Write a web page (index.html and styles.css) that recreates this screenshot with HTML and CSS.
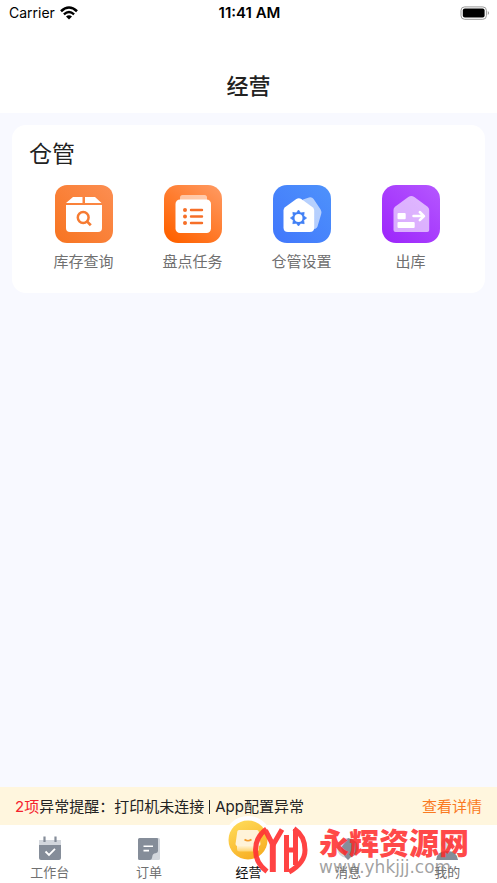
FILE: index.html
```html
<!DOCTYPE html>
<html lang="zh-CN">
<head>
  <meta charset="UTF-8" />
  <meta name="viewport" content="width=device-width, initial-scale=1.0" />
  <title>经营</title>
  <link rel="stylesheet" href="styles.css">
</head>
<body>
  <div class="statusbar">
    <div class="carrier">
      <span>Carrier</span>
      <svg width="18" height="14" viewBox="0 0 18 14">
        <path d="M1 5.2 Q9 -2.2 17 5.2" fill="none" stroke="#000" stroke-width="2.6"/>
        <path d="M3.9 8.3 Q9 3.6 14.1 8.3" fill="none" stroke="#000" stroke-width="2.3"/>
        <path d="M6 10.6 Q9 8 12 10.6 L9 13.6 Z"/>
      </svg>
    </div>
    <div class="time">11:41 AM</div>
    <div class="battery">
      <svg width="30" height="14" viewBox="0 0 30 14">
        <rect x="1" y="0.9" width="25.4" height="12.4" rx="3.6" fill="none" stroke="#999"/>
        <rect x="2.8" y="2.6" width="21.8" height="9" rx="2"/>
        <path d="M27.8 5 Q30.4 7 27.8 9 Z" fill="#999"/>
      </svg>
    </div>
  </div>

  <header class="header">
    <h1>经营</h1>
  </header>

  <main class="content">
    <section class="card">
      <h2>仓管</h2>
      <div class="grid">
        <a class="item" href="#">
          <svg class="item-icon" viewBox="0 0 58 58">
            <defs><linearGradient id="g1" x1="1" y1="0" x2="0" y2="1"><stop offset="0" stop-color="#fc8e52"/><stop offset="1" stop-color="#f77420"/></linearGradient></defs>
            <rect width="58" height="58" rx="12" fill="url(#g1)"/>
            <path d="M18 12 H27.5 V18 H11 Z M30 12 H40 L46.5 18 H30 Z" fill="#fff"/>
            <path d="M11 20 H47 V43 Q47 47 43 47 H15 Q11 47 11 43 Z" fill="#fff"/>
            <circle cx="28.2" cy="32.5" r="5.4" fill="none" stroke="#f67b32" stroke-width="2.5"/>
            <path d="M32.2 36.6 L35.8 40.2" stroke="#f67b32" stroke-width="2.7"/>
          </svg>
          <span>库存查询</span>
        </a>
        <a class="item" href="#">
          <svg class="item-icon" viewBox="0 0 58 58">
            <defs><linearGradient id="g2" x1="1" y1="0" x2="0.2" y2="1"><stop offset="0" stop-color="#ff9b64"/><stop offset="1" stop-color="#ff6200"/></linearGradient></defs>
            <rect width="58" height="58" rx="14" fill="url(#g2)"/>
            <rect x="16" y="10" width="27" height="8" rx="2.5" fill="#fff" opacity="0.55"/>
            <rect x="11.5" y="14.5" width="35.5" height="33.5" rx="4.5" fill="#fff"/>
            <g fill="#f66f28"><circle cx="21" cy="25" r="2"/><circle cx="21" cy="31.5" r="2"/><circle cx="21" cy="38" r="2"/></g>
            <path d="M27 25 H38 M27 31.5 H38 M27 38 H38" stroke="#f66f28" stroke-width="2.4" stroke-linecap="round"/>
          </svg>
          <span>盘点任务</span>
        </a>
        <a class="item" href="#">
          <svg class="item-icon" viewBox="0 0 58 58">
            <defs><linearGradient id="g3" x1="1" y1="0" x2="0" y2="1"><stop offset="0" stop-color="#4e92fb"/><stop offset="1" stop-color="#4177fc"/></linearGradient></defs>
            <rect width="58" height="58" rx="14" fill="url(#g3)"/>
            <path d="M30 14.5 L36 12.4 Q39 11.6 40.6 14 L47.6 24.5 Q48.8 26.5 48.2 29 L44.5 41.5 Q43.5 44.5 38 44.5 H30 Z" fill="#fff" opacity="0.6"/>
            <path d="M10.5 25.5 Q10.5 23.5 12 22.3 L23.3 14 Q25.8 12.3 28.3 14 L39.6 22.3 Q41.2 23.5 41.2 25.5 V42.5 Q41.2 47 36.7 47 H15 Q10.5 47 10.5 42.5 Z" fill="#fff"/>
            <path d="M25.5 25 L27.7 27.9 L31.2 27.4 L30.7 30.9 L33.6 33 L30.7 35.2 L31.2 38.7 L27.7 38.2 L25.5 41 L23.3 38.2 L19.8 38.7 L20.3 35.2 L17.4 33 L20.3 30.9 L19.8 27.4 L23.3 27.9 Z" fill="#4180f5" stroke="#4180f5" stroke-width="0.7" stroke-linejoin="round"/>
            <circle cx="25.5" cy="33" r="4" fill="#fff"/>
          </svg>
          <span>仓管设置</span>
        </a>
        <a class="item" href="#">
          <svg class="item-icon" viewBox="0 0 58 58">
            <defs><linearGradient id="g4" x1="1" y1="0" x2="0.1" y2="1"><stop offset="0" stop-color="#b557ff"/><stop offset="1" stop-color="#9d27fb"/></linearGradient></defs>
            <rect width="58" height="58" rx="14" fill="url(#g4)"/>
            <path d="M11.5 25 Q11.5 23 13 21.8 L26.3 12 Q29.3 10.2 32.3 12 L45.6 21.8 Q47.2 23 47.2 25 V45 Q47.2 47 45.2 47 H13.5 Q11.5 47 11.5 45 Z" fill="#fff" opacity="0.6"/>
            <rect x="15.5" y="28" width="8.2" height="6.2" rx="1" fill="#fff"/>
            <rect x="15.5" y="37" width="17.2" height="6" rx="1" fill="#fff"/>
            <path d="M31.5 31.1 H41.5 M37.8 27 L42 31.1 L37.8 35.2" fill="none" stroke="#fff" stroke-width="2.5" stroke-linecap="round" stroke-linejoin="round"/>
          </svg>
          <span>出库</span>
        </a>
      </div>
    </section>
  </main>

  <div class="alert">
    <p><em>2项</em>异常提醒：打印机未连接<i class="bar"></i>App配置异常</p>
    <a href="#">查看详情</a>
  </div>

  <nav class="tabbar">
    <a class="tab" href="#">
      <svg width="24" height="24" viewBox="0 0 24 24">
        <rect x="1" y="4" width="22" height="6" fill="#d3d7dd"/>
        <path d="M1 9 H23 V22 Q23 24 21 24 H3 Q1 24 1 22 Z" fill="#858d99"/>
        <path d="M6.5 0.5 V6 M17.5 0.5 V6" stroke="#858d99" stroke-width="2.2"/>
        <path d="M7.5 15.5 L11 19 L17 12.8" fill="none" stroke="#fff" stroke-width="1.8"/>
      </svg>
      <span>工作台</span>
    </a>
    <a class="tab" href="#">
      <svg width="24" height="24" viewBox="0 0 24 24">
        <rect x="4" y="2" width="19" height="22" rx="1.5" fill="#d3d7dd"/>
        <path d="M2.5 2 H20 Q21 2 21 3 V15 Q21 17 18.5 17.3 Q15.5 17.6 15.3 20.5 Q15 24 12.5 24 H2.5 Q1 24 1 22.5 V3.5 Q1 2 2.5 2 Z" fill="#858d99"/>
        <path d="M6.5 10.3 H16 M6.5 14.6 H12" stroke="#fff" stroke-width="1.6"/>
      </svg>
      <span>订单</span>
    </a>
    <a class="tab active" href="#">
      <svg class="tab-main" width="48" height="48" viewBox="0 0 48 48">
        <defs>
          <linearGradient id="g5" x1="0.2" y1="0" x2="0.7" y2="1"><stop offset="0" stop-color="#ffdb58"/><stop offset="1" stop-color="#f7ad22"/></linearGradient>
          <linearGradient id="g6" x1="0" y1="0" x2="0" y2="1"><stop offset="0" stop-color="#fff6e2"/><stop offset="1" stop-color="#ffd46e"/></linearGradient>
        </defs>
        <circle cx="24" cy="24" r="24" fill="#fff"/>
        <circle cx="24" cy="24" r="19.5" fill="url(#g5)"/>
        <path d="M15 14 H33 Q34.5 14 34.7 15.5 L36.5 28 Q36.5 30 34.5 30 H13.5 Q11.5 30 11.5 28 L13.3 15.5 Q13.5 14 15 14 Z" fill="#fff3d9"/>
        <path d="M13 29 H35 V33 Q35 35.5 32.5 35.5 H15.5 Q13 35.5 13 33 Z" fill="url(#g6)"/>
        <path d="M20.5 23.5 Q24 26 27.5 23.5" fill="none" stroke="#f39b2c" stroke-width="1.7"/>
      </svg>
      <span>经营</span>
    </a>
    <a class="tab" href="#">
      <svg width="24" height="24" viewBox="0 0 24 24">
        <circle cx="11" cy="12" r="10" fill="#d3d7dd"/>
        <path d="M12 2 Q22 4 22 12 Q22 19 15 21 L12 24 L9 21 L5 12 Z" fill="#858d99"/>
      </svg>
      <span>消息</span>
    </a>
    <a class="tab" href="#">
      <svg width="24" height="24" viewBox="0 0 24 24">
        <circle cx="12" cy="8" r="6" fill="#d3d7dd"/>
        <path d="M1 24 Q2 15 12 15 Q22 15 23 24 Z" fill="#858d99"/>
      </svg>
      <span>我的</span>
    </a>
  </nav>

  <div class="watermark">
    <svg width="56" height="50" viewBox="0 0 56 50">
      <g fill="none" stroke="#ff3434" stroke-width="5" opacity="0.92">
        <path d="M14.5 3 Q3.5 11 3.5 24 Q3.5 37 15 45.5"/>
        <path d="M13.5 4.5 L21 19 L30 3.5" stroke-linejoin="round"/>
        <path d="M20.8 17 V46" stroke-width="6"/>
        <path d="M34.5 9 V46 M34.5 24 H43.5 M43.5 3 V39"/>
        <path d="M42 2.5 Q53 10 53 24 Q53 37 37 46"/>
      </g>
    </svg>
    <div class="watermark-text">
      <strong>永辉资源网</strong>
      <span>www.yhkjjj.com</span>
    </div>
  </div>
</body>
</html>
```

FILE: styles.css
```css
* {
  box-sizing: border-box;
}
body {
  margin: 0;
  min-height: 100vh;
  display: flex;
  flex-direction: column;
  position: relative;
  overflow-x: hidden;
  background: #f8f9ff;
  color: #222;
  font-family: Inter, "Noto Sans CJK SC", sans-serif;
}
h1, h2, p {
  margin: 0;
}
a {
  text-decoration: none;
}
svg {
  display: block;
}

.statusbar {
  display: grid;
  grid-template-columns: 1fr auto 1fr;
  align-items: center;
  height: 25px;
  padding: 0 7px 0 9px;
  background: #fff;
  color: #000;
  font-size: 14px;
}
.carrier {
  display: flex;
  align-items: center;
  gap: 5px;
}
.time {
  font-size: 15px;
  font-weight: 600;
}
.battery {
  justify-self: end;
}

.header {
  padding: 45px 0 10px;
  background: #fff;
  text-align: center;
}
.header h1 {
  font-size: 22px;
  line-height: 33px;
  font-weight: 500;
}

.content {
  flex: 1;
  padding: 12px;
}
.card {
  padding: 12px 20px 20px 17px;
  background: #fff;
  border-radius: 14px;
}
.card h2 {
  font-size: 23px;
  line-height: 34px;
  font-weight: 400;
}
.grid {
  display: grid;
  grid-template-columns: repeat(4, 1fr);
  padding-top: 14px;
}
.item {
  display: flex;
  flex-direction: column;
  align-items: center;
  gap: 8px;
  color: #707070;
  font-size: 15px;
  line-height: 22px;
}
.item-icon {
  width: 58px;
  height: 58px;
}

.alert {
  display: flex;
  justify-content: space-between;
  align-items: center;
  height: 38px;
  padding: 0 15px 2px;
  background: #fff6de;
  font-size: 15px;
}
.alert em {
  color: #f5222d;
  font-style: normal;
}
.alert a {
  color: #fa7a22;
}
.bar {
  display: inline-block;
  width: 1px;
  height: 14px;
  margin: 0 5px;
  background: #222;
  vertical-align: -2px;
}

.tabbar {
  display: grid;
  grid-template-columns: repeat(5, 1fr);
  height: 58px;
  background: #fff;
}
.tab {
  display: flex;
  flex-direction: column;
  align-items: center;
  justify-content: flex-end;
  gap: 3px;
  padding-bottom: 1px;
  color: #707070;
  font-size: 13px;
  line-height: 19px;
}
.tab.active {
  gap: 0;
  color: #111;
}
.tab-main {
  margin-top: -12px;
  margin-bottom: -1px;
}

/* site mark over the tab bar */
.watermark {
  position: absolute;
  right: 28px;
  bottom: 7px;
  display: flex;
  align-items: center;
  gap: 11px;
  pointer-events: none;
}
.watermark-text {
  display: flex;
  flex-direction: column;
}
.watermark strong {
  color: rgba(255, 40, 40, 0.85);
  font-size: 30px;
  line-height: 32px;
  font-weight: 900;
}
.watermark span {
  color: rgba(120, 120, 120, 0.7);
  font-family: "DejaVu Sans", sans-serif;
  font-size: 17px;
  line-height: 17px;
}
```
